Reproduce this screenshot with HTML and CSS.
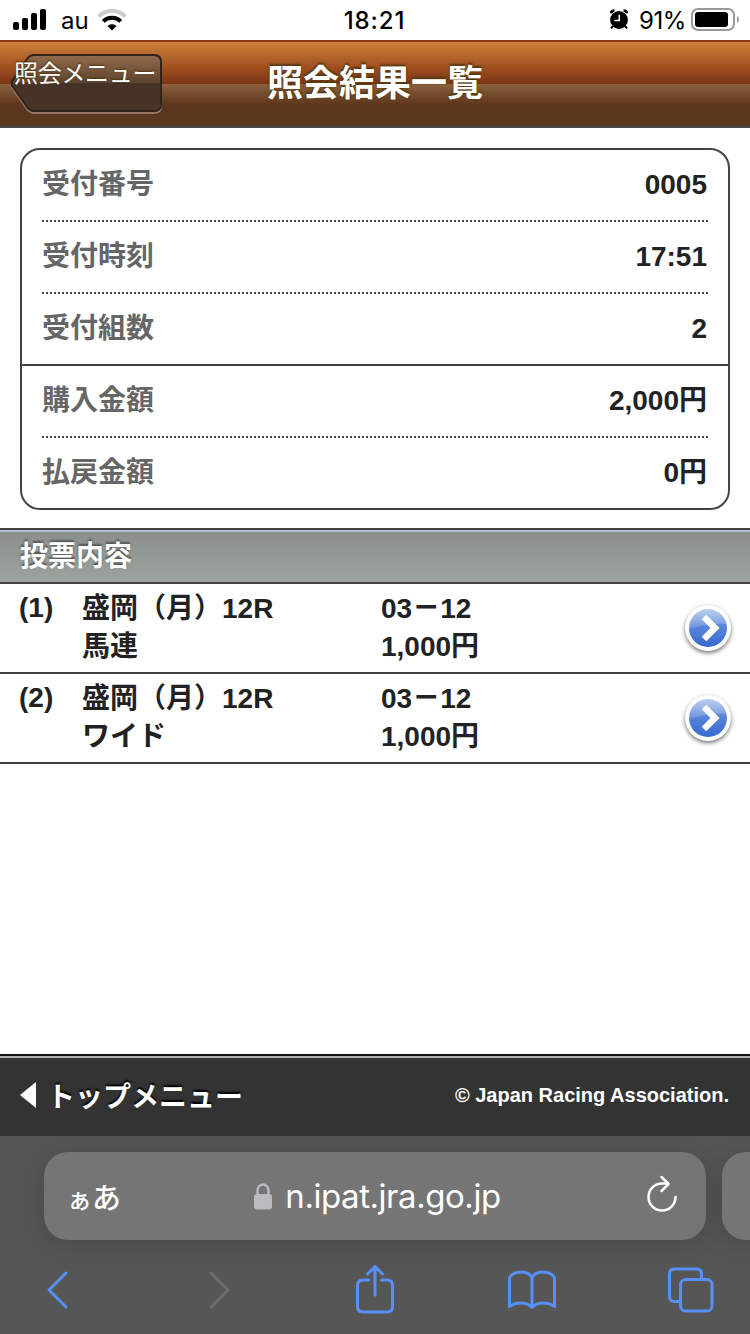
FILE: index.html
```html
<!DOCTYPE html>
<html lang="ja">
<head>
  <meta charset="UTF-8" />
  <meta name="viewport" content="width=device-width, initial-scale=1.0"/>
  <title>照会結果一覧</title>
  <link rel="stylesheet" href="styles.css">
</head>
<body>
  <div class="status-bar">
    <div class="status-left">
      <svg width="34" height="22" viewBox="0 0 34 22">
        <rect x="0" y="13" width="6" height="8" rx="2"/>
        <rect x="9" y="9" width="6" height="12" rx="2"/>
        <rect x="18" y="4" width="6" height="17" rx="2"/>
        <rect x="27" y="0" width="6" height="21" rx="2"/>
      </svg>
      <span class="carrier">au</span>
      <svg width="30" height="22" viewBox="0 0 30 22" fill="none">
        <path d="M1.500 7.500C9 0 21 0 28.500 7.500" stroke="#ccc" stroke-width="4"/>
        <path d="M6.300 12.300C11 7.600 19 7.600 23.700 12.300" stroke="#000" stroke-width="4"/>
        <path d="M10.500 17C13 14.500 17 14.500 19.500 17L15 21.500Z" fill="#000"/>
      </svg>
    </div>
    <div class="clock">18:21</div>
    <div class="status-right">
      <svg width="20" height="20" viewBox="0 0 20 20">
        <circle cx="10" cy="11" r="8.900"/>
        <path d="M2 4.200Q2.500 1.500 5.500 1.500M18 4.200Q17.500 1.500 14.500 1.500" fill="none" stroke="#000" stroke-width="2.600"/>
        <path d="M4 17L2 19.400M16 17L18 19.400" stroke="#000" stroke-width="2"/>
        <path d="M10.200 5.800V11.500H5.300" fill="none" stroke="#fff" stroke-width="1.500"/>
      </svg>
      <span class="percent">91%</span>
      <svg width="49" height="24" viewBox="0 0 49 24">
        <rect x="1" y="1" width="42" height="21" rx="6" fill="none" stroke="#999" stroke-width="2"/>
        <rect x="4" y="4" width="33" height="15" rx="3"/>
        <path d="M46 8Q48 9 48 11.500T46 15Z" fill="#999"/>
      </svg>
    </div>
  </div>

  <header class="header">
    <a class="back">
      <svg class="back-shape" width="154" height="62" viewBox="0 0 154 62">
        <defs>
          <linearGradient id="backFill" x1="0" y1="0" x2="0" y2="1">
            <stop offset="0" stop-color="#936b4d"/>
            <stop offset=".5" stop-color="#5b432e"/>
            <stop offset=".5" stop-color="#463327"/>
            <stop offset="1" stop-color="#473427"/>
          </linearGradient>
        </defs>
        <path d="M24 3H144Q151 3 151 10V52Q151 59 144 59H24Q20 59 17 55L3 35Q0 31 3 27L17 7Q20 3 24 3Z" fill="none" stroke="#967965" stroke-width="2"/>
        <path d="M24 1H144Q151 1 151 8V50Q151 57 144 57H24Q20 57 17 53L3 33Q0 29.500 3 26L17 5Q20 1 24 1Z" fill="url(#backFill)" stroke="#30231c" stroke-width="2"/>
      </svg>
      <span class="back-text">照会メニュー</span>
    </a>
    <h1>照会結果一覧</h1>
  </header>

  <main>
    <dl class="summary">
      <div class="line"><dt>受付番号</dt><dd>0005</dd></div>
      <div class="line"><dt>受付時刻</dt><dd>17:51</dd></div>
      <div class="line last"><dt>受付組数</dt><dd>2</dd></div>
      <div class="line"><dt>購入金額</dt><dd>2,000円</dd></div>
      <div class="line end"><dt>払戻金額</dt><dd>0円</dd></div>
    </dl>

    <h2>投票内容</h2>
    <ul class="bets">
      <li>
        <span class="no">(1)</span>
        <div class="race">盛岡（月）12R<br>馬連</div>
        <div class="amount">03<span class="dash">－</span>12<br>1,000円</div>
        <svg class="arrow" width="54" height="56" viewBox="0 0 54 56"><use href="#arrow"/></svg>
      </li>
      <li>
        <span class="no">(2)</span>
        <div class="race">盛岡（月）12R<br>ワイド</div>
        <div class="amount">03<span class="dash">－</span>12<br>1,000円</div>
        <svg class="arrow" width="54" height="56" viewBox="0 0 54 56"><use href="#arrow"/></svg>
      </li>
    </ul>
  </main>

  <footer class="footer">
    <a class="top-menu">
      <svg width="16" height="26" viewBox="0 0 16 26"><path d="M16 0V26L0 13Z" fill="#fff"/></svg>
      <span>トップメニュー</span>
    </a>
    <small>© Japan Racing Association.</small>
  </footer>

  <div class="browser">
    <div class="tabs">
      <div class="address">
        <span class="aa"><span class="small-a">ぁ</span>あ</span>
        <div class="url">
          <svg width="18" height="27" viewBox="0 0 18 27">
            <path d="M3.500 12V7.500a5.500 6 0 0 1 11 0V12" fill="none" stroke="#bcbbc1" stroke-width="2.400"/>
            <rect y="11" width="18" height="15.500" rx="3" fill="#bcbbc1"/>
          </svg>
          <span>n.ipat.jra.go.jp</span>
        </div>
        <svg class="reload" width="32" height="38" viewBox="0 0 32 38" fill="none" stroke="#fff" stroke-width="2.500" stroke-linecap="round" stroke-linejoin="round">
          <path d="M29.500 22A13.500 13.500 0 1 1 16 8.500H22"/>
          <path d="M15.500 2L22.500 9L15.500 16"/>
        </svg>
      </div>
      <div class="next-tab"></div>
    </div>
    <div class="toolbar">
      <svg width="24" height="40" viewBox="0 0 24 40"><path d="M21 3L4 20L21 37"/></svg>
      <svg class="disabled" width="24" height="40" viewBox="0 0 24 40"><path d="M3 3L20 20L3 37"/></svg>
      <svg width="40" height="50" viewBox="0 0 40 50"><path d="M13.500 15H8Q2.500 15 2.500 20.500V41.500Q2.500 47 8 47H32Q37.500 47 37.500 41.500V20.500Q37.500 15 32 15H26.500M20 30V2M12.500 9L20 1.500L27.500 9"/></svg>
      <svg width="50" height="42" viewBox="0 0 50 42"><path d="M25 38.500V8.500M25 8.500Q22 3 14.500 3Q6 3 2.500 8.500V37.500Q7 34 13.500 34Q21 34 25 38.500M25 8.500Q28 3 35.500 3Q44 3 47.500 8.500V37.500Q43 34 36.500 34Q29 34 25 38.500"/></svg>
      <svg width="46" height="46" viewBox="0 0 46 46"><rect x="12.500" y="12.500" width="31.500" height="31.500" rx="5"/><path d="M12 34.500H6.500Q1.500 34.500 1.500 29.500V7Q1.500 2 6.500 2H28.500Q33.500 2 33.500 7V12"/></svg>
    </div>
  </div>

  <!-- shared round arrow -->
  <svg class="defs" width="0" height="0">
    <defs>
      <linearGradient id="blue" x1="0" y1="0" x2="0" y2="1">
        <stop offset="0" stop-color="#83a5e2"/>
        <stop offset=".5" stop-color="#5683da"/>
        <stop offset="1" stop-color="#3769d0"/>
      </linearGradient>
      <linearGradient id="shine" x1="0" y1="0" x2="0" y2="1">
        <stop offset="0" stop-color="#fff" stop-opacity=".5"/>
        <stop offset="1" stop-color="#fff" stop-opacity=".1"/>
      </linearGradient>
      <g id="arrow">
        <circle class="ring" cx="27" cy="26" r="23"/>
        <circle cx="27" cy="26" r="19" fill="url(#blue)"/>
        <path d="M8 26A19 19 0 0 1 46 22Q28 21 8 27Z" fill="url(#shine)"/>
        <path d="M23 15L34 26L23 37" fill="none" stroke="#fff" stroke-width="6.500"/>
      </g>
    </defs>
  </svg>
</body>
</html>
```
FILE: styles.css
```css
* { box-sizing: border-box; margin: 0; padding: 0; }

body {
  width: 750px;
  height: 1334px;
  display: flex;
  flex-direction: column;
  overflow: hidden;
  background: #fff;
  color: #222;
  font-family: "Liberation Sans", "Noto Sans CJK JP", sans-serif;
  font-size: 28px;
  font-weight: bold;
}

svg { display: block; flex-shrink: 0; }

/* status bar */
.status-bar {
  height: 40px;
  display: flex;
  justify-content: space-between;
  padding: 0 10px 0 13px;
  color: #000;
  font: 24px Inter, sans-serif;
  line-height: 41px;
}

.status-left, .status-right { display: flex; width: 131px; }
.status-left { width: 127px; }
.status-left svg { margin-top: 9px; }
.carrier { margin: 0 9px 0 14px; width: 27px; }
.clock { font-weight: 500; letter-spacing: 0.9px; }
.status-right svg { margin-top: 8px; }
.status-right svg:first-child { margin-top: 9px; }
.percent { width: 62px; padding-left: 10px; letter-spacing: -0.4px; white-space: nowrap; }

/* header */
.header {
  height: 88px;
  display: grid;
  grid-template-columns: 162px 1fr 162px;
  border-top: 2px solid #8a3d18;
  border-bottom: 2px solid #484848;
  background: linear-gradient(#cc8238, #a0501f 60%, #7a3417) top / 100% 42px no-repeat,
    linear-gradient(#8b623c, #5c351d 50%, #573a20) bottom / 100% 42px no-repeat;
}

.back {
  display: grid;
  padding: 12px 0 0 10px;
  font: 24px "Noto Sans CJK JP", sans-serif;
  line-height: 36px;
  color: #fff;
}

.back-shape, .back-text { grid-area: 1 / 1; }
.back-text {
  padding-left: 4px;
  white-space: nowrap;
  letter-spacing: -0.3px;
  text-shadow: 0 -1px 2px #503000;
  z-index: 1;
}

h1 {
  text-align: center;
  font-size: 36px;
  line-height: 84px;
  color: #fff;
  text-shadow: 0 -2px 2px #553a10, 0 0 2px #553a10;
}

/* summary box */
.summary {
  margin: 20px 20px 18px;
  border: 2px solid #444;
  border-radius: 20px;
}

.line {
  height: 72px;
  margin: 0 20px;
  display: flex;
  justify-content: space-between;
  border-bottom: 2px dotted #444;
  line-height: 70px;
}

.line.last { margin: 0; padding: 0 20px; border-bottom: 2px solid #444; }
.line.end { height: 70px; border: none; }
dt { color: #666; }
dd { padding-right: 1px; }

h2 {
  height: 56px;
  padding-left: 20px;
  border-top: 2px solid #444;
  border-bottom: 2px solid #444;
  background: linear-gradient(#b1bcd0 2px, #8a8f8b 2px, #9da39f);
  color: #fff;
  font-size: 28px;
  line-height: 53px;
  text-shadow: 0 -2px 2px #555;
}

/* bet list */
.bets { list-style: none; }

.bets li {
  height: 90px;
  display: grid;
  grid-template-columns: 64px 299px 300px 54px;
  padding: 6px 0 0 18px;
  border-bottom: 2px solid #444;
  line-height: 38px;
}

.no { padding-left: 1px; line-height: 35px; }
.dash { font-family: "Noto Sans CJK JP", sans-serif; font-weight: 900; line-height: 1; }
.arrow { margin-top: 12px; }
.ring { fill: #fff; filter: drop-shadow(0 2px 2px rgba(0,0,0,0.55)); }
.defs { position: absolute; }

/* page footer */
.footer {
  height: 82px;
  margin-top: auto;
  display: flex;
  align-items: center;
  justify-content: space-between;
  padding: 0 21px 2px 20px;
  border-top: 2px solid #111;
  background: linear-gradient(#b0b0b0 2px, #333 2px);
  color: #fff;
}

.top-menu {
  display: flex;
  align-items: center;
  gap: 11px;
  text-shadow: 0 -2px 2px #000;
}

.footer small { font-size: 20px; }

/* browser bar */
.browser {
  height: 198px;
  overflow: hidden;
  background: #565656;
}

.tabs { display: flex; gap: 16px; padding: 16px 0 0 44px; }

.address, .next-tab {
  height: 88px;
  flex-shrink: 0;
  background: #757575;
  border-radius: 24px;
  box-shadow: 0 4px 28px rgba(0,0,0,0.17);
}

.address {
  width: 662px;
  display: flex;
  align-items: center;
  justify-content: space-between;
  padding: 0 28px 0 25px;
  color: #fff;
  font: 33px Inter, sans-serif;
}

.next-tab { width: 60px; }
.aa { font: 500 29px "Noto Sans CJK JP", sans-serif; margin-left: -2px; }
.small-a { font-size: 25px; }
.url {
  display: flex;
  align-items: center;
  gap: 13px;
  margin-right: 12px;
  letter-spacing: -0.45px;
}
.reload { margin-bottom: 4px; }

.toolbar {
  height: 94px;
  display: grid;
  grid-template-columns: 163px 147px 152px 161px 46px;
  align-items: center;
  padding: 6px 0 0 45px;
  fill: none;
  stroke: #5790f8;
  stroke-width: 3;
  stroke-linecap: round;
  stroke-linejoin: round;
}

.disabled { stroke: #6d6d6d; }
```
